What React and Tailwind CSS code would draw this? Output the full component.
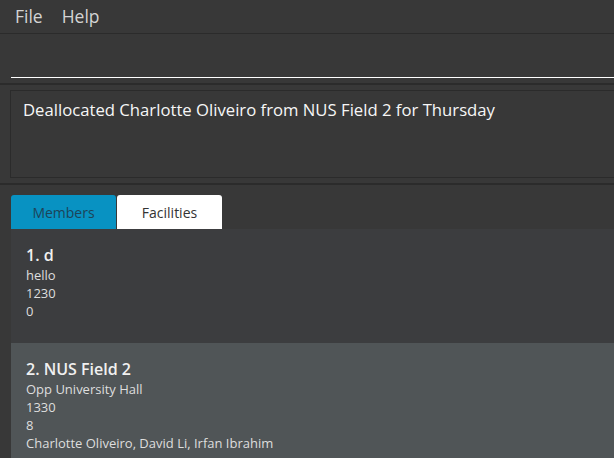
import React from "react";

export default function App() {
  const font = { fontFamily: '"Open Sans", "Noto Sans", sans-serif' };
  return (
    <div className="w-[614px] h-[458px] overflow-hidden bg-[#383838] flex flex-col" style={font}>
      {/* menu bar */}
      <div className="h-[34px] shrink-0 flex items-center pb-[1px] border-b border-[#2b2b2b] text-[17.5px] text-[#d4d4d4]">
        <span className="ml-[15px]">File</span>
        <span className="ml-[19px]">Help</span>
      </div>
      {/* command box */}
      <div className="h-[51px] shrink-0 flex flex-col justify-end pl-[11px] pb-[5px] border-b-2 border-[#2b2b2b]">
        <div className="h-[1px] bg-white w-full"></div>
      </div>
      {/* result display */}
      <div className="h-[100px] shrink-0 pt-[5px] pl-[10px] border-b-2 border-[#2b2b2b]">
        <div className="h-[88px] border border-r-0 border-[#2b2b2b] pl-[12px] pt-[6px] text-[16.7px] text-[#f6f6f6]">
          Deallocated Charlotte Oliveiro from NUS Field 2 for Thursday
        </div>
      </div>
      {/* tabs */}
      <div className="pt-[10px] pl-[11px] flex gap-[1px] shrink-0">
        <div className="w-[105px] h-[34px] rounded-t-[3px] bg-[#0892c2] flex items-center justify-center text-[14px] text-[#1d4458]">
          Members
        </div>
        <div className="w-[105px] h-[34px] rounded-t-[3px] bg-white flex items-center justify-center text-[14px] text-[#333]">
          Facilities
        </div>
      </div>
      {/* list */}
      <div className="ml-[11px] flex flex-col">
        <div className="h-[114px] bg-[#3c3d3f] pl-[15px] pt-[15px]">
          <div className="h-[22px] leading-[22px] text-[16px] font-semibold text-[#f0f0f0]">1. d</div>
          <div className="text-[13px] leading-[18px] text-[#dedede]">hello</div>
          <div className="text-[13px] leading-[18px] text-[#dedede]">1230</div>
          <div className="text-[13px] leading-[18px] text-[#dedede]">0</div>
        </div>
        <div className="h-[120px] bg-[#505557] pl-[15px] pt-[15px]">
          <div className="h-[22px] leading-[22px] text-[16px] font-semibold text-[#f0f0f0]">2. NUS Field 2</div>
          <div className="text-[13px] leading-[18px] text-[#dedede]">Opp University Hall</div>
          <div className="text-[13px] leading-[18px] text-[#dedede]">1330</div>
          <div className="text-[13px] leading-[18px] text-[#dedede]">8</div>
          <div className="text-[13px] leading-[18px] text-[#dedede]">Charlotte Oliveiro, David Li, Irfan Ibrahim</div>
        </div>
      </div>
    </div>
  );
}
